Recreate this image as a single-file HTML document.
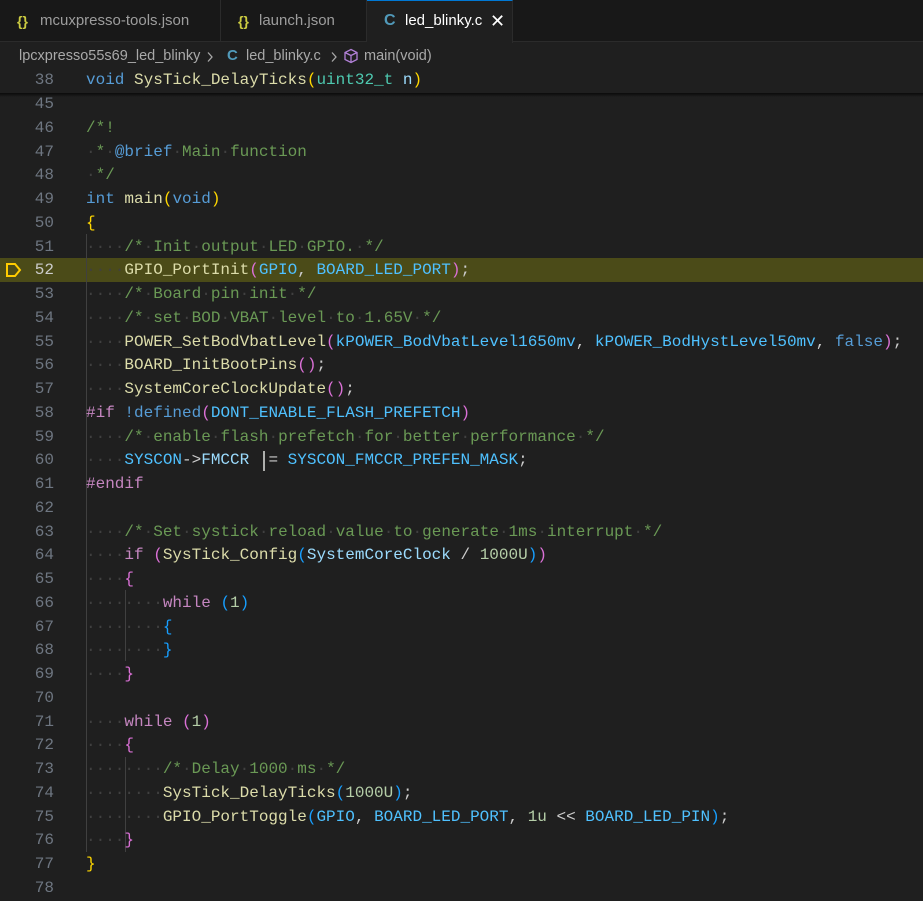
<!DOCTYPE html>
<html><head><meta charset="utf-8"><style>
body{margin:0;width:923px;height:900px;background:#1f1f1f;overflow:hidden;font-family:"Liberation Sans",sans-serif;position:relative}
.tabs{position:absolute;left:0;top:0;width:923px;height:42px;background:#181818;border-bottom:1px solid #2b2b2b;box-sizing:border-box}
.tab{position:absolute;top:0;height:42px;border-right:1px solid #2b2b2b;box-sizing:border-box;color:#9d9d9d;font-size:15px;line-height:42px}
.tab.act{background:#1f1f1f;color:#fff;border-top:1px solid #0078d4;height:43px}
.br{position:absolute;left:0;top:43px;height:26px;line-height:26px;font-size:14.5px;color:#a9a9a9;white-space:nowrap}
.code{font-family:"Liberation Mono",monospace;font-size:16px}
.ln{position:absolute;left:0;width:54px;text-align:right;color:#6e7681;height:23.75px;line-height:23.75px}
.l{position:absolute;left:86px;white-space:pre;color:#cccccc;height:23.75px;line-height:23.75px}
.d{color:#404040}.k{color:#569cd6}.f{color:#dcdcaa}.c{color:#6a9955}.m{color:#4fc1ff}.t{color:#4ec9b0}.v{color:#9cdcfe}.p{color:#c586c0}.n{color:#b5cea8}
.b1{color:#ffd700}.b2{color:#da70d6}.b3{color:#179fff}
.g{position:absolute;width:1px;background:#404040}
</style></head><body>
<div class="tabs">
<div class="tab" style="left:0;width:221px"><span style="position:absolute;left:17px;color:#cbcb41;font-weight:bold;font-size:14px">{}</span><span style="position:absolute;left:40px">mcuxpresso-tools.json</span></div>
<div class="tab" style="left:221px;width:146px"><span style="position:absolute;left:17px;color:#cbcb41;font-weight:bold;font-size:14px">{}</span><span style="position:absolute;left:38px">launch.json</span></div>
<div class="tab act" style="left:367px;width:146px"><span style="position:absolute;left:17px;color:#519aba;font-weight:bold;font-size:16px;top:-1px">C</span><span style="position:absolute;left:38px;top:-1px">led_blinky.c</span><span style="position:absolute;left:123px;top:-1px;font-size:18px">✕</span></div>
</div>
<div class="br"><span style="position:absolute;left:19px">lpcxpresso55s69_led_blinky</span>
<svg style="position:absolute;left:206px;top:8px" width="8" height="12" viewBox="0 0 8 12"><path d="M2 1.5L6 6L2 10.5" fill="none" stroke="#a9a9a9" stroke-width="1.3"/></svg>
<span style="position:absolute;left:227px;color:#519aba;font-weight:bold;font-size:15px">C</span><span style="position:absolute;left:246px">led_blinky.c</span>
<svg style="position:absolute;left:330px;top:8px" width="8" height="12" viewBox="0 0 8 12"><path d="M2 1.5L6 6L2 10.5" fill="none" stroke="#a9a9a9" stroke-width="1.3"/></svg>
<svg style="position:absolute;left:343px;top:5px" width="16" height="16" viewBox="0 0 16 16" fill="none" stroke="#b180d7" stroke-width="1.3"><path d="M8 1.5L14 4.5V11.5L8 14.5L2 11.5V4.5Z M2 4.5L8 7.5L14 4.5 M8 7.5V14.5"/></svg>
<span style="position:absolute;left:364px">main(void)</span></div>
<div class="code">
<div class="ln" style="top:69px">38</div><div class="l" style="top:69px"><span class="k">void</span> <span class="f">SysTick_DelayTicks</span><span class="b1">(</span><span class="t">uint32_t</span> <span class="v">n</span><span class="b1">)</span></div>
<div style="position:absolute;left:0;top:93px;width:923px;height:4px;background:linear-gradient(#0a0a0a,rgba(0,0,0,0))"></div>
<div style="position:absolute;left:0;top:258px;width:923px;height:24px;background:#4b4b18"></div>
<svg style="position:absolute;left:5px;top:262px" width="18" height="16" viewBox="0 0 18 16"><path d="M2 2H10L15 8L10 14H2Z" fill="none" stroke="#ffcc00" stroke-width="2"/></svg>
<div class="g" style="left:86px;top:234px;height:618px"></div>
<div class="g" style="left:125px;top:590px;height:71px"></div>
<div class="g" style="left:125px;top:757px;height:95px"></div>
<div id="lines"></div>
<div style="position:absolute;left:263px;top:451px;width:2px;height:20px;background:#aeafad"></div>
</div>
<script>
const L=[
[45,''],[46,'~/*!~'],[47,'~ * ~<span class="k">@brief</span>~ Main function~'],[48,'~ */~'],
[49,'<span class="k">int</span> <span class="f">main</span><span class="b1">(</span><span class="k">void</span><span class="b1">)</span>'],[50,'<span class="b1">{</span>'],
[51,'D~/* Init output LED GPIO. */~'],
[52,'D<span class="f">GPIO_PortInit</span><span class="b2">(</span><span class="m">GPIO</span>, <span class="m">BOARD_LED_PORT</span><span class="b2">)</span>;',1],
[53,'D~/* Board pin init */~'],[54,'D~/* set BOD VBAT level to 1.65V */~'],
[55,'D<span class="f">POWER_SetBodVbatLevel</span><span class="b2">(</span><span class="m">kPOWER_BodVbatLevel1650mv</span>, <span class="m">kPOWER_BodHystLevel50mv</span>, <span class="k">false</span><span class="b2">)</span>;'],
[56,'D<span class="f">BOARD_InitBootPins</span><span class="b2">()</span>;'],[57,'D<span class="f">SystemCoreClockUpdate</span><span class="b2">()</span>;'],
[58,'<span class="p">#if</span> <span class="k">!defined</span><span class="b2">(</span><span class="m">DONT_ENABLE_FLASH_PREFETCH</span><span class="b2">)</span>'],
[59,'D~/* enable flash prefetch for better performance */~'],
[60,'D<span class="m">SYSCON</span>-&gt;<span class="v">FMCCR</span> |= <span class="m">SYSCON_FMCCR_PREFEN_MASK</span>;'],
[61,'<span class="p">#endif</span>'],[62,''],
[63,'D~/* Set systick reload value to generate 1ms interrupt */~'],
[64,'D<span class="p">if</span> <span class="b2">(</span><span class="f">SysTick_Config</span><span class="b3">(</span><span class="v">SystemCoreClock</span> / <span class="n">1000U</span><span class="b3">)</span><span class="b2">)</span>'],
[65,'D<span class="b2">{</span>'],[66,'DD<span class="p">while</span> <span class="b3">(</span><span class="n">1</span><span class="b3">)</span>'],[67,'DD<span class="b3">{</span>'],[68,'DD<span class="b3">}</span>'],[69,'D<span class="b2">}</span>'],[70,''],
[71,'D<span class="p">while</span> <span class="b2">(</span><span class="n">1</span><span class="b2">)</span>'],[72,'D<span class="b2">{</span>'],
[73,'DD~/* Delay 1000 ms */~'],[74,'DD<span class="f">SysTick_DelayTicks</span><span class="b3">(</span><span class="n">1000U</span><span class="b3">)</span>;'],
[75,'DD<span class="f">GPIO_PortToggle</span><span class="b3">(</span><span class="m">GPIO</span>, <span class="m">BOARD_LED_PORT</span>, <span class="n">1u</span> &lt;&lt; <span class="m">BOARD_LED_PIN</span><span class="b3">)</span>;'],
[76,'D<span class="b2">}</span>'],[77,'<span class="b1">}</span>'],[78,'']];
let h='';L.forEach((r,i)=>{const top=(93+i*23.75).toFixed(2);let s=r[1];
s=s.replace(/^(D+)/,m=>'<span class="d">····</span>'.repeat(m.length));
s=s.replace(/~([^~]*)~/g,(a,t)=>'<span class="c">'+t.replace(/ /g,'<span class="d">·</span>')+'</span>');
h+=`<div class="ln" style="top:${top}px;${r[2]?'color:#cccccc':''}">${r[0]}</div><div class="l" style="top:${top}px">${s}</div>`;});
document.getElementById('lines').innerHTML=h;
</script>
</body></html>
